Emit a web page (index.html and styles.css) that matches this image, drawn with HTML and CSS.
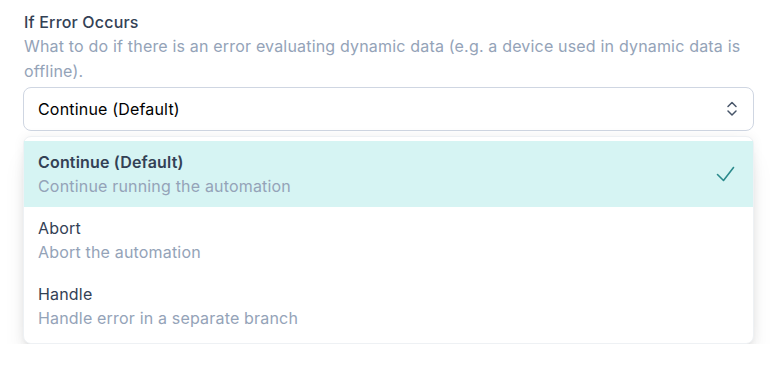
FILE: index.html
```html
<!DOCTYPE html>
<html>
<head>
<meta charset="utf-8">
<link rel="stylesheet" href="styles.css">
</head>
<body>
<div class="field">
  <div class="label">If Error Occurs</div>
  <div class="desc">What to do if there is an error evaluating dynamic data (e.g. a device used in dynamic data is offline).</div>
  <div class="select">
    <span class="select-value">Continue (Default)</span>
    <svg class="chev" width="12" height="16" viewBox="0 0 12 16"><polyline points="2,5.5 6,1.5 10,5.5" fill="none" stroke="#475569" stroke-width="1.5" stroke-linecap="round" stroke-linejoin="round"/><polyline points="2,10 6,14 10,10" fill="none" stroke="#475569" stroke-width="1.5" stroke-linecap="round" stroke-linejoin="round"/></svg>
  </div>
  <ul class="menu">
    <li class="opt selected">
      <div class="opt-text">
        <div class="opt-title">Continue (Default)</div>
        <div class="opt-sub">Continue running the automation</div>
      </div>
      <svg class="check" width="20" height="16" viewBox="0 0 20 16"><polyline points="2.5,8.5 8.5,14.5 18.5,1.5" fill="none" stroke="#2b8a8c" stroke-width="1.6" stroke-linecap="round" stroke-linejoin="round"/></svg>
    </li>
    <li class="opt">
      <div class="opt-text">
        <div class="opt-title">Abort</div>
        <div class="opt-sub">Abort the automation</div>
      </div>
    </li>
    <li class="opt">
      <div class="opt-text">
        <div class="opt-title">Handle</div>
        <div class="opt-sub">Handle error in a separate branch</div>
      </div>
    </li>
  </ul>
</div>
</body>
</html>
```
FILE: styles.css
```css
* { box-sizing: border-box; }
html, body { margin: 0; padding: 0; background: #ffffff; }
body {
  font-family: Inter, "Noto Sans", sans-serif;
  font-size: 16px;
  line-height: 24px;
  letter-spacing: 0.18px;
}
.field {
  width: 731px;
  margin-left: 23px;
  padding-top: 10px;
  display: flex;
  flex-direction: column;
}
.label {
  font-weight: 500;
  color: #334155;
  padding-left: 1px;
}
.desc {
  color: #94a3b8;
  padding-left: 1px;
  line-height: 25px;
}
.select {
  margin-top: 3px;
  height: 44px;
  border: 1px solid #cfd6e2;
  border-radius: 8px;
  display: flex;
  align-items: center;
  justify-content: space-between;
  padding: 0 14px 0 14px;
  color: #000000;
  background: #fff;
}
.chev { margin-right: 1px; }
.menu {
  list-style: none;
  margin: 5px 0 0 0;
  padding: 4px 0;
  border: 1px solid #eef1f4;
  border-radius: 8px;
  background: #fff;
  box-shadow: 0 20px 25px -5px rgba(0,0,0,0.10), 0 8px 10px -6px rgba(0,0,0,0.12), 0 0 12px rgba(0,0,0,0.06);
}
.opt {
  display: flex;
  align-items: center;
  justify-content: space-between;
  padding: 9px 18px 9px 14px;
  height: 66px;
}
.opt.selected { background: #d6f4f3; }
.opt-title { color: #334155; }
.selected .opt-title { font-weight: 600; }
.opt-sub { color: #94a3b8; }
```
